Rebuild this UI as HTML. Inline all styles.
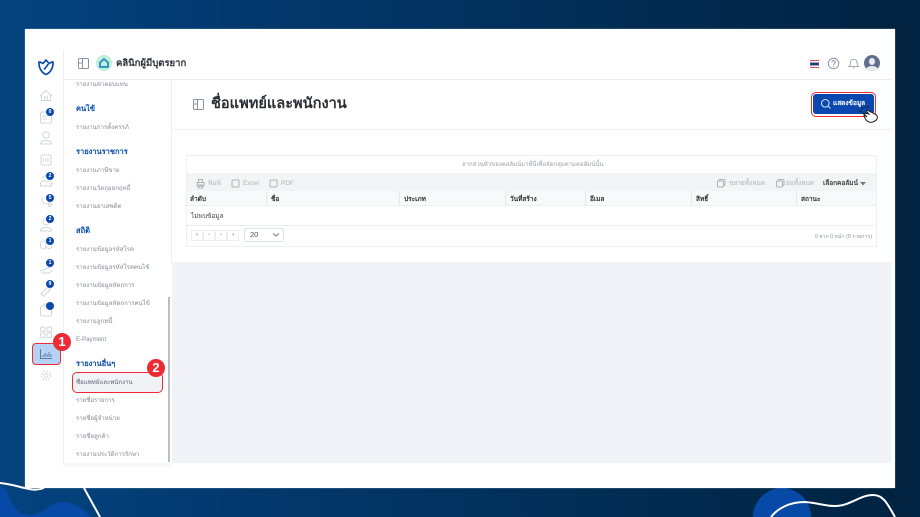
<!DOCTYPE html>
<html lang="th"><head><meta charset="utf-8">
<style>
*{box-sizing:border-box;margin:0;padding:0}
html{width:920px;height:517px;overflow:hidden;background:linear-gradient(90deg,#04437f 0%,#03396f 25%,#022d55 65%,#012240 100%)}
body{position:relative;width:920px;height:517px;overflow:hidden;font-family:"Liberation Sans","Noto Sans CJK SC",sans-serif;filter:blur(.35px)}
.a{position:absolute;white-space:nowrap}
.m{position:absolute;left:76px;font-size:6.1px;color:#858c96;white-space:nowrap;line-height:9px}
.h{position:absolute;left:76px;font-size:7.5px;font-weight:700;color:#0a4fa8;white-space:nowrap;line-height:10px}
.b{position:absolute;width:8px;height:8px;border-radius:50%;background:#0b48ad;color:#fff;font-size:5px;line-height:8px;text-align:center;font-weight:700}
.th{position:absolute;top:191px;height:15px;font-size:6.5px;font-weight:700;color:#333;line-height:17px;padding-left:4px;border-left:1px solid #e6e8ec;white-space:nowrap}
.pg{position:absolute;top:230px;width:12px;height:11px;border:1px solid #eceef1;font-size:6px;color:#aaa;text-align:center;line-height:9px}
svg{position:absolute;overflow:visible}
svg.clip{overflow:hidden}
.red{position:absolute;background:#ee2a35;color:#fff;border-radius:50%;font-weight:700;text-align:center;width:18px;height:18px;line-height:18px;font-size:13px}
</style></head><body>
<svg class="clip" style="left:0;top:0" width="920" height="517">
<path d="M7 490 C12 510 22 516 32 515 C46 513 50 502 63 502 C75 502 84 510 91 517 L0 517 L0 486Z" fill="#0649a6"/>
<circle cx="782" cy="517" r="29" fill="#0649a6"/>
</svg>
<div class="a" style="left:25px;top:29px;width:870px;height:459px;background:#fff;box-shadow:0 0 1px #9bb"></div>
<svg class="clip" style="left:0;top:0" width="920" height="517" fill="none" stroke="#fff">
<path d="M0 483 C12 484 22 488 32 489.500 C36 490 40 489.500 44 488" stroke-width="2"/>
<path d="M84 488 L100 517" stroke-width="2"/>
<path d="M771 517 C778 508 790 502 805 502 C818 503 825 506 835 506 C850 506 860 495 873 495 C884 495 888 505 895 517" stroke-width="2"/>
</svg>

<!-- main grey -->
<div class="a" style="left:172px;top:262px;width:719px;height:201px;background:#f1f3f8"></div>
<!-- lines -->
<div class="a" style="left:63px;top:79px;width:828px;height:1px;background:#eceef2"></div>
<div class="a" style="left:63px;top:50px;width:1px;height:413px;background:#eceef2"></div>
<div class="a" style="left:171px;top:80px;width:1px;height:183px;background:#eceef2"></div>
<div class="a" style="left:172px;top:129px;width:719px;height:1px;background:#eef0f3"></div>
<div class="a" style="left:63px;top:463px;width:108px;height:4px;background:#f7f8fa"></div>
<div class="a" style="left:168px;top:297px;width:2px;height:165px;background:#b9bdc4"></div>

<!-- logo -->
<svg style="left:38px;top:59px" width="16" height="16" viewBox="0 0 16 16" fill="none" stroke="#0b4aa8" stroke-width="1.7" stroke-linejoin="round">
<path d="M1 3 C3 3 4 4 5 4.500 L8 1 L11 4.500 C12 4 13 3 15 3 C15.500 9 12 14 8 15.500 C4 14 .5 9 1 3Z"/><path d="M6.500 10 L10 5.500" stroke-linecap="round"/></svg>

<!-- side icons -->
<svg style="left:0;top:0" width="80" height="400" fill="none" stroke="#d3d6da" stroke-width="1">
<path d="M40 96 L46 90.500 L52 96 M41.500 95 V100.500 H50.500 V95 M44.500 100.500 V97 H47.500 V100.500"/>
<rect x="40.500" y="112" width="11" height="11" rx="1.500"/><path d="M43 116 H48 M43 119 H47"/>
<circle cx="46" cy="135" r="3.200"/><path d="M40.500 144 C40.500 139 51.500 139 51.500 144 Z"/>
<rect x="41" y="155" width="10" height="10" rx="1"/><path d="M43.500 158 V162 M46 158 V162 M48 158 V162"/>
<path d="M40.500 182 V186 H51.500 V182 M41 181 H51 M42 178 C44 175 48 175 50 178"/>
<path d="M42 197 V201 C42 205 50 205 50 201 V197"/><circle cx="50" cy="205" r="1.500"/>
<circle cx="46" cy="222" r="3"/><path d="M40.500 231 C40.500 226 51.500 226 51.500 231 Z"/>
<rect x="40.500" y="241" width="5.500" height="8" rx="2.500"/><circle cx="49" cy="245.500" r="3"/>
<path d="M40 271 L46 269 L52 266 M41 273 H49 L53 270"/>
<path d="M41 294 L48 287 L50.500 289.500 L43.500 296.500 Z"/>
<rect x="40.500" y="306" width="11" height="10" rx="1.500"/><path d="M44 306 V304 H48 V306"/>
<rect x="40.500" y="327" width="4.500" height="4.500" rx="1.500"/><rect x="47" y="327" width="4.500" height="4.500" rx="1.500"/><rect x="40.500" y="333" width="4.500" height="4.500" rx="1.500"/><rect x="47" y="333" width="4.500" height="4.500" rx="1.500"/>
<circle cx="46" cy="375.500" r="2"/><circle cx="46" cy="375.500" r="4.500" stroke-dasharray="2 1"/>
</svg>
<div class="b" style="left:46px;top:108px">0</div>
<div class="b" style="left:46px;top:172px">2</div>
<div class="b" style="left:46px;top:194px">5</div>
<div class="b" style="left:46px;top:215px">2</div>
<div class="b" style="left:46px;top:237px">1</div>
<div class="b" style="left:46px;top:259px">1</div>
<div class="b" style="left:46px;top:280px">9</div>
<div class="b" style="left:46px;top:302px"></div>

<!-- active side -->
<div class="a" style="left:32px;top:343px;width:29px;height:22px;background:#b5d2f5;border:1.500px solid #ee2a35;border-radius:4px"></div>
<svg style="left:40px;top:349px" width="12" height="10" fill="none" stroke="#5b7ea8"><path d="M.5 0 V9.500 H12"/><path d="M3 8 V6 M5 8 V4 M7 8 V5 M9 8 V3 M11 8 V5"/></svg>
<div class="red" style="left:53px;top:333px">1</div>

<!-- top bar -->
<svg style="left:78px;top:58px" width="11" height="11" fill="none" stroke="#8a93a3"><rect x=".5" y=".5" width="10" height="10" rx="1"/><path d="M4.500 .5 V10.500 M.5 5 H4.500"/></svg>
<div class="a" style="left:96px;top:55px;width:16px;height:16px;border-radius:50%;background:#bff0db"></div>
<svg style="left:99px;top:58px" width="10" height="10" fill="none" stroke="#2a86b8" stroke-width="1.700"><path d="M5 1 L9 4.500 V9 H1 V4.500 Z"/></svg>
<div class="a" style="left:116px;top:57px;font-size:9.500px;font-weight:700;color:#2a3038;line-height:13px">คลินิกผู้มีบุตรยาก</div>

<!-- flag -->
<div class="a" style="left:810px;top:60px;width:9px;height:8px;background:linear-gradient(#e64450 0 14%,#fff 14% 30%,#2e3f7c 30% 70%,#fff 70% 86%,#e64450 86%)"></div>
<svg style="left:828px;top:58px" width="11" height="11" fill="none" stroke="#8a93a3"><circle cx="5.500" cy="5.500" r="5.200"/><path d="M3.800 4.300 C3.800 2.300 7.300 2.300 7.300 4.300 C7.300 5.500 5.500 5.500 5.500 7"/><path d="M5.500 8 V9"/></svg>
<svg style="left:849px;top:58px" width="10" height="11" fill="none" stroke="#a0a6b0"><path d="M0 8.500 H9.500 C8 7 8.200 5.500 8 4 C7.700 .5 1.800 .5 1.500 4 C1.300 5.500 1.500 7 0 8.500Z"/><path d="M4 10 H5.500"/></svg>
<div class="a" style="left:864px;top:55px;width:16px;height:16px;border-radius:50%;background:#626f8c;overflow:hidden"><div class="a" style="left:5px;top:3px;width:6px;height:7px;border-radius:50%;background:#e9ecf0"></div><div class="a" style="left:2px;top:11px;width:12px;height:8px;border-radius:50%;background:#e8edf0"></div></div>

<!-- sidebar menu -->
<div class="m" style="top:80px">รายงานค่าตอบแทน</div>
<div class="h" style="top:104px">คนไข้</div>
<div class="m" style="top:123px">รายงานการตั้งครรภ์</div>
<div class="h" style="top:147px">รายงานราชการ</div>
<div class="m" style="top:166px">รายงานภาษีขาย</div>
<div class="m" style="top:184px">รายงานวัตถุออกฤทธิ์</div>
<div class="m" style="top:202px">รายงานยาเสพติด</div>
<div class="h" style="top:226px">สถิติ</div>
<div class="m" style="top:245px">รายงานข้อมูลรหัสโรค</div>
<div class="m" style="top:263px">รายงานข้อมูลรหัสโรคคนไข้</div>
<div class="m" style="top:281px">รายงานข้อมูลหัตถการ</div>
<div class="m" style="top:299px">รายงานข้อมูลหัตถการคนไข้</div>
<div class="m" style="top:317px">รายงานลูกหนี้</div>
<div class="m" style="top:335px">E-Payment</div>
<div class="h" style="top:359px">รายงานอื่นๆ</div>
<div class="a" style="left:72px;top:372px;width:91px;height:21px;background:#f0f2f6;border:1.500px solid #ee2a35;border-radius:5px"></div>
<div class="m" style="top:378px;color:#5a6472">ชื่อแพทย์และพนักงาน</div>
<div class="red" style="left:147px;top:359px">2</div>
<div class="m" style="top:396px">รายชื่อรายการ</div>
<div class="m" style="top:414px">รายชื่อผู้จำหน่าย</div>
<div class="m" style="top:432px">รายชื่อลูกค้า</div>
<div class="m" style="top:450px">รายงานประวัติการรักษา</div>

<!-- title -->
<svg style="left:193px;top:99px" width="11" height="11" fill="none" stroke="#8a93a3"><rect x=".5" y=".5" width="10" height="10" rx="1"/><path d="M4.500 .5 V10.500 M.5 5 H4.500"/></svg>
<div class="a" style="left:211px;top:94px;font-size:14.600px;font-weight:700;color:#2a2f36;line-height:20px">ชื่อแพทย์และพนักงาน</div>

<!-- button -->
<div class="a" style="left:811px;top:92px;width:65px;height:25px;border:1.500px solid #ee2a35;border-radius:5px;background:#fff"></div>
<div class="a" style="left:813px;top:94px;width:61px;height:20px;border-radius:3px;background:#0b48ad"></div>
<svg style="left:821px;top:99px" width="10" height="10" fill="none" stroke="#d5e3f7"><circle cx="4.300" cy="4.300" r="3.800"/><path d="M7 7 L9.500 9.500"/></svg>
<div class="a" style="left:833px;top:99px;font-size:6.500px;font-weight:700;color:#fff;line-height:10px">แสดงข้อมูล</div>
<svg style="left:858px;top:104px" width="22" height="22" fill="#fff" stroke="#222" stroke-width="1"><path d="M5 9 L9 13 L6 11 C6 13 8 17 11 18 C14 19 18 17 19 15 C20 13 19 11 17 10 L10 6.500 C9 6 8 7 9 8 L11 10 Z"/><path d="M3 3 L5 5 M7 1 L7.500 4 M1 7 L4 7.500 M10 2 L9 4.500" fill="none" stroke-width=".9"/></svg>

<!-- table -->
<div class="a" style="left:186px;top:155px;width:691px;height:92px;background:#fff;border:1px solid #eef0f2"></div>
<div class="a" style="left:462px;top:161px;font-size:6px;color:#9a9fa6;line-height:9px">ลากส่วนหัวของคอลัมน์มาที่นี่เพื่อจัดกลุ่มตามคอลัมน์นั้น</div>
<div class="a" style="left:187px;top:173px;width:689px;height:18px;background:#f3f4f6"></div>
<svg style="left:196px;top:179px" width="90" height="10" fill="none" stroke="#aeb2b8"><path d="M1 3.500 H8 V7 H1 Z M2.500 3.500 V.5 H6.500 V3.500 M2.500 6 H6.500 V9 H2.500Z"/><rect x="36" y="1" width="7" height="7" rx="1"/><rect x="74" y="1" width="7" height="7" rx="1"/></svg>
<svg style="left:717px;top:179px" width="70" height="10" fill="none" stroke="#aeb2b8"><rect x="2" y=".5" width="6" height="6" rx="1"/><rect x=".5" y="2" width="6" height="6" rx="1" fill="#f3f4f6"/><rect x="61" y=".5" width="6" height="6" rx="1"/><rect x="59.500" y="2" width="6" height="6" rx="1" fill="#f3f4f6"/></svg>
<div class="a" style="left:208px;top:179px;font-size:6.500px;color:#aeb2b8;line-height:10px">พิมพ์</div>
<div class="a" style="left:243px;top:179px;font-size:6.500px;color:#aeb2b8;line-height:10px">Excel</div>
<div class="a" style="left:281px;top:179px;font-size:6.500px;color:#aeb2b8;line-height:10px">PDF</div>
<div class="a" style="left:729px;top:179px;font-size:6.500px;color:#aeb2b8;line-height:10px">ขยายทั้งหมด</div>
<div class="a" style="left:786px;top:179px;font-size:6.500px;color:#aeb2b8;line-height:10px">ย่อทั้งหมด</div>
<div class="a" style="left:823px;top:179px;font-size:6.500px;font-weight:700;color:#444;line-height:10px">เลือกคอลัมน์</div>
<svg style="left:860px;top:182px" width="6" height="4"><path d="M0 0 H6 L3 3.500Z" fill="#777"/></svg>
<div class="a" style="left:187px;top:191px;width:689px;height:15px;background:#f8f9fa;border-bottom:1px solid #eceef1"></div>
<div class="th" style="left:186px;border:0">ลำดับ</div>
<div class="th" style="left:266px">ชื่อ</div>
<div class="th" style="left:399px">ประเภท</div>
<div class="th" style="left:505px">วันที่สร้าง</div>
<div class="th" style="left:585px">อีเมล</div>
<div class="th" style="left:691px">สิทธิ์</div>
<div class="th" style="left:796px">สถานะ</div>
<div class="a" style="left:191px;top:212px;font-size:6.500px;color:#444;line-height:10px">ไม่พบข้อมูล</div>
<div class="a" style="left:187px;top:225px;width:689px;height:1px;background:#eceef1"></div>
<div class="pg" style="left:191px">«</div><div class="pg" style="left:203px">‹</div><div class="pg" style="left:215px">›</div><div class="pg" style="left:227px">»</div>
<div class="a" style="left:244px;top:228px;width:40px;height:14px;border:1px solid #dfe2e6;border-radius:2px;font-size:7.500px;color:#555;line-height:12px;padding-left:5px">20</div>
<svg style="left:273px;top:233px" width="6" height="4" fill="none" stroke="#777"><path d="M0 .5 L3 3 L6 .5"/></svg>
<div class="a" style="right:48px;top:232px;font-size:5.300px;color:#8b9098;line-height:10px">0 จาก 0 หน้า (0 รายการ)</div>
</body></html>
